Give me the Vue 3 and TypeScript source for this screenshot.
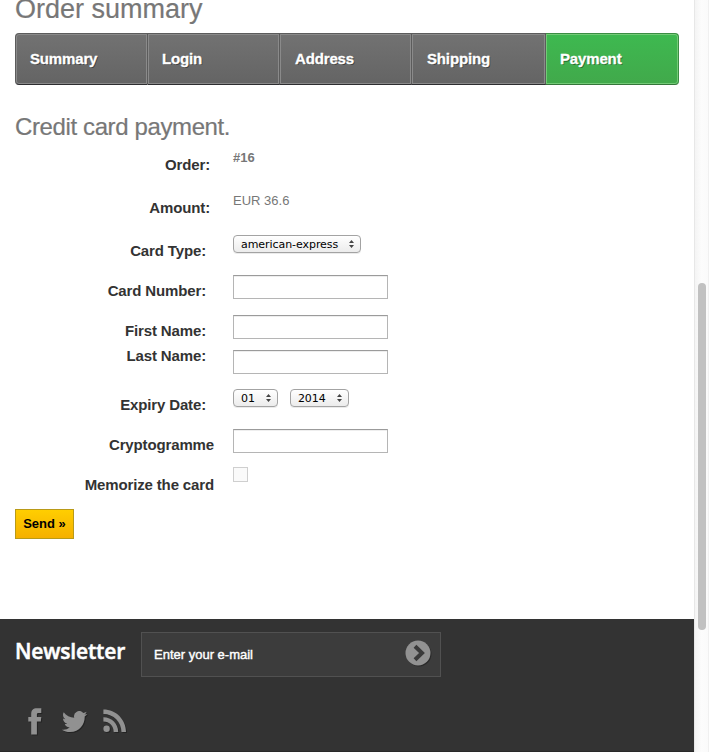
<script setup lang="ts">
interface Row {
  id: string
  label: string
  size: 'tall' | 'normal' | 'tight' | 'loose' | 'last'
  kind: 'strong' | 'text' | 'select' | 'input' | 'check'
  values?: string[]
  inset: 'none' | 'small' | 'medium'
}

const steps: string[] = ['Summary', 'Login', 'Address', 'Shipping', 'Payment']

const rows: Row[] = [
  { id: 'order', label: 'Order:', size: 'tall', kind: 'strong', values: ['#16'], inset: 'small' },
  { id: 'amount', label: 'Amount:', size: 'tall', kind: 'text', values: ['EUR 36.6'], inset: 'small' },
  { id: 'type', label: 'Card Type:', size: 'normal', kind: 'select', values: ['american-express'], inset: 'medium' },
  { id: 'number', label: 'Card Number:', size: 'normal', kind: 'input', inset: 'medium' },
  { id: 'first', label: 'First Name:', size: 'tight', kind: 'input', inset: 'medium' },
  { id: 'last', label: 'Last Name:', size: 'loose', kind: 'input', inset: 'medium' },
  { id: 'expiry', label: 'Expiry Date:', size: 'normal', kind: 'select', values: ['01', '2014'], inset: 'medium' },
  { id: 'crypto', label: 'Cryptogramme', size: 'normal', kind: 'input', inset: 'none' },
  { id: 'memorize', label: 'Memorize the card', size: 'last', kind: 'check', inset: 'none' },
]
</script>

<template>
  <div class="window">
    <div class="page">
      <main class="content">
        <h1 class="heading title">Order summary</h1>
        <ul class="steps">
          <li v-for="(step, i) in steps" :key="step" class="step" :class="{ current: i === steps.length - 1 }">
            <span>{{ step }}</span>
          </li>
        </ul>
        <h2 class="heading subtitle">Credit card payment.</h2>
        <form @submit.prevent>
          <div v-for="row in rows" :key="row.id" class="row" :class="row.size">
            <label class="label" :class="'inset-' + row.inset" :for="row.id">{{ row.label }}</label>
            <div class="field" :class="row.kind">
              <template v-if="row.kind === 'select'">
                <button v-for="value in row.values" :key="value" type="button" class="picker">
                  <span>{{ value }}</span>
                  <svg width="5" height="8" viewBox="0 0 5 8"><path d="M2.5 0L5 3H0zM2.5 8L0 5h5z" fill="#444" /></svg>
                </button>
              </template>
              <input v-else-if="row.kind === 'input'" :id="row.id" class="textbox" type="text" />
              <input v-else-if="row.kind === 'check'" :id="row.id" class="checkbox" type="checkbox" />
              <span v-else>{{ row.values?.[0] }}</span>
            </div>
          </div>
          <button class="send" type="submit">Send »</button>
        </form>
      </main>
      <footer class="footer">
        <div class="newsletter">
          <h4 class="newsletter-title">Newsletter</h4>
          <div class="email">
            <span class="email-text">Enter your e-mail</span>
            <svg class="go" width="27" height="27" viewBox="0 0 27 27">
              <circle cx="13" cy="13" r="12.5" fill="#929292" />
              <path d="M10 6.2L17 13L10 19.8" fill="none" stroke="#3a3a3a" stroke-width="4" />
            </svg>
          </div>
        </div>
        <div class="social">
          <svg class="icon facebook" width="14" height="27" viewBox="0 0 14 27">
            <path d="M3.2 26.5V13.5H0.3V9H3.2V6.2C3.2 2 5.1.3 9 .3h4.3v4.6h-2.8c-1.3 0-1.6.5-1.6 1.6V9h4.4l-.5 4.5H8.9v13z" />
          </svg>
          <svg class="icon twitter" width="27" height="22" viewBox="0 0 27 22">
            <path d="M26.3 2.8c-.9.4-1.8.7-2.9.8 1-.6 1.8-1.6 2.200-2.800-1 .6-2.100 1-3.300 1.200a5.200 5.200 0 0 0-9 4.800C9 6.600 5.200 4.500 2.700 1.300c-1.400 2.400-.6 5.400 1.600 6.900-.8 0-1.600-.2-2.300-.6 0 2.500 1.700 4.700 4.100 5.200-.8.2-1.500.2-2.300.1.700 2.100 2.600 3.500 4.900 3.600A10.500 10.500 0 0 1 .9 18.700c2.400 1.500 5.200 2.400 8.100 2.400 9.800 0 15-8.200 14.700-15.600 1-.7 1.900-1.600 2.600-2.700z" />
          </svg>
          <svg class="icon rss" width="24" height="24" viewBox="0 0 24 24">
            <circle cx="3.600" cy="19.800" r="3.200" />
            <path d="M.4 8.200v4.400c6 0 10.300 4.400 10.300 10.400h4.500C15.200 14.600 8.800 8.200.4 8.200zM.4.4v4.500C10.500 4.900 18.500 12.900 18.500 23H23C23 10.400 13 .4.4.4z" />
          </svg>
        </div>
      </footer>
    </div>
    <div class="scroll-track"><div class="scroll-thumb"></div></div>
  </div>
</template>

<style>
body {
  overflow: hidden;
  background: #fff;
}
</style>

<style scoped>
.window {
  display: flex;
  width: 709px;
  height: 752px;
  overflow: hidden;
  font-family: "Liberation Sans", Arial, sans-serif;
}
.window *,
.window {
  box-sizing: border-box;
}
.page {
  width: 694px;
  display: flex;
  flex-direction: column;
}
.content {
  height: 619px;
  padding: 0 15px;
}
.heading {
  margin: 0;
  font-weight: 400;
  color: #777;
  white-space: nowrap;
  -webkit-text-stroke: 0.2px #777;
}
.title {
  height: 33px;
  margin-top: -7px;
  margin-bottom: 7px;
  font-size: 27px;
  line-height: 32px;
}
.subtitle {
  height: 62px;
  padding-top: 27px;
  font-size: 24px;
  line-height: 30px;
  letter-spacing: -0.38px;
}
.steps {
  display: grid;
  grid-template-columns: 133px 132px 132px 134px 133px;
  margin: 0;
  padding: 0;
  height: 52px;
  list-style: none;
}
.step {
  display: flex;
  align-items: center;
  padding: 0 0 2px 14px;
  border: 1px solid #5c5c5c;
  border-left-width: 0;
  border-bottom-color: #2d2d30;
  background: linear-gradient(#727272, #646464);
  box-shadow: inset 0 0 0 1px #8a8a8a;
  color: #fff;
  font-size: 15px;
  font-weight: 700;
  letter-spacing: -0.15px;
  text-shadow: 1px 1px rgba(0, 0, 0, 0.4);
  -webkit-text-stroke: 0.3px #fff;
}
.step:first-child {
  border-left-width: 1px;
  border-radius: 4px 0 0 4px;
}
.step:nth-child(3),
.step:nth-child(4) {
  padding-left: 15px;
}
.step:last-child {
  border-radius: 0 4px 4px 0;
}
.step.current {
  border-color: #3b8e43 #3b8e43 #35763a;
  background: linear-gradient(#3eb950, #41a94b);
  box-shadow: inset 0 0 0 1px #73ca77;
}
.row {
  display: grid;
  grid-template-columns: 199px 1fr;
  column-gap: 19px;
  height: 40px;
}
.tall { height: 43px; }
.tight { height: 25px; }
.loose { height: 49px; }
.last { height: 42px; }
.label {
  padding-top: 8px;
  color: #333;
  font-size: 15px;
  font-weight: 700;
  line-height: 20px;
  letter-spacing: -0.14px;
  text-align: right;
}
.inset-small { padding-right: 4px; }
.inset-medium { padding-right: 8px; }
.field {
  display: flex;
  align-items: flex-start;
  gap: 12px;
  padding-top: 2px;
  color: #777;
  font-size: 13px;
  line-height: 20px;
}
.strong {
  padding-top: 1px;
  font-weight: 700;
}
.text { padding-top: 1px; }
.check { padding-top: 0; }
.loose .field { padding-top: 12px; }
.picker {
  display: flex;
  align-items: center;
  gap: 11px;
  height: 18px;
  padding: 0 6px 0 7px;
  border: 1px solid #a3a3a3;
  border-radius: 4px;
  background: linear-gradient(#fff, #f5f5f5 50%, #ececec);
  box-shadow: 0 1px 0 rgba(0, 0, 0, 0.08);
  color: #000;
  font-family: "DejaVu Sans", sans-serif;
  font-size: 11px;
  letter-spacing: -0.06px;
  line-height: 16px;
}
.picker span { padding-top: 1px; }
.picker svg { flex: none; }
.textbox {
  width: 155px;
  height: 24px;
  margin: 0;
  border: 1px solid #b5b5b5;
  border-top-color: #9b9b9b;
  background: #fff;
  box-shadow: inset 0 1px #eee;
}
.checkbox {
  appearance: none;
  width: 15px;
  height: 15px;
  margin: 0;
  border: 1px solid #cfcfcf;
  background: #fafafa;
}
.send {
  display: block;
  width: 59px;
  height: 30px;
  padding: 0 0 2px;
  border: 1px solid #b99a18;
  background: linear-gradient(#ffce00, #f5b000);
  color: #000;
  font: 700 13px "Liberation Sans", Arial, sans-serif;
}
.footer {
  height: 133px;
  padding: 13px 15px 0;
  border-bottom: 1px solid #292929;
  background: #333;
}
.newsletter {
  display: flex;
  height: 76px;
}
.newsletter-title {
  width: 126px;
  margin: 0;
  padding-top: 4px;
  color: #fff;
  font: 600 21px/30px "Open Sans", sans-serif;
  letter-spacing: -0.15px;
  -webkit-text-stroke: 0.5px #fff;
}
.email {
  display: flex;
  align-items: center;
  justify-content: space-between;
  width: 300px;
  height: 45px;
  padding: 0 8px 2px 12px;
  border: 1px solid #515151;
  background: #3c3c3c;
  color: #fff;
  font-size: 13px;
}
.email-text {
  padding-top: 2px;
  -webkit-text-stroke: 0.4px #fff;
}
.go,
.icon { filter: drop-shadow(1px 1px 0 rgba(0, 0, 0, 0.3)); }
.social {
  display: flex;
  align-items: flex-start;
  padding-left: 13px;
}
.icon {
  flex: none;
  overflow: visible;
  fill: #919191;
}
.twitter { margin: 3px 1px 0 19px; }
.rss { margin: 1px 0 0 14px; }
.scroll-track {
  width: 15px;
  padding: 283px 0 0 4px;
  border-left: 1px solid #e7e7e7;
  border-right: 1px solid #f0f0f0;
  background: linear-gradient(90deg, #f4f4f4, #fcfcfc 50%, #fafafa);
}
.scroll-thumb {
  width: 8px;
  height: 347px;
  margin-left: -1px;
  border-radius: 4px;
  background: #c1c1c1;
}
</style>
